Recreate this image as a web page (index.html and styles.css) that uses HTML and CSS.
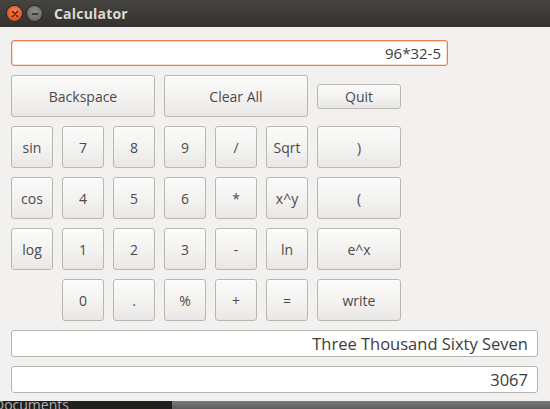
FILE: index.html
```html
<!DOCTYPE html>
<html>
<head>
<meta charset="utf-8">
<link rel="stylesheet" href="styles.css">
</head>
<body>
<div class="window">
  <div class="titlebar">
    <span class="wbtn close"><svg width="14" height="14" viewBox="0 0 14 14"><path d="M4.5 4.5 L9.5 9.5 M9.5 4.5 L4.5 9.5" stroke="#4a1a0a" stroke-width="1.4" stroke-linecap="round"/></svg></span>
    <span class="wbtn min"><svg width="14" height="14" viewBox="0 0 14 14"><path d="M4 7 H10" stroke="#2e2e2c" stroke-width="1.6"/></svg></span>
    <span class="title">Calculator</span>
  </div>
  <div class="content">
    <div class="field display">96*32-5</div>
    <div class="keys">
      <button class="key span3">Backspace</button>
      <button class="key span3">Clear All</button>
      <button class="key quit">Quit</button>

      <button class="key">sin</button>
      <button class="key">7</button>
      <button class="key">8</button>
      <button class="key">9</button>
      <button class="key">/</button>
      <button class="key">Sqrt</button>
      <button class="key">)</button>

      <button class="key">cos</button>
      <button class="key">4</button>
      <button class="key">5</button>
      <button class="key">6</button>
      <button class="key">*</button>
      <button class="key">x^y</button>
      <button class="key">(</button>

      <button class="key">log</button>
      <button class="key">1</button>
      <button class="key">2</button>
      <button class="key">3</button>
      <button class="key">-</button>
      <button class="key">ln</button>
      <button class="key">e^x</button>

      <button class="key col2">0</button>
      <button class="key">.</button>
      <button class="key">%</button>
      <button class="key">+</button>
      <button class="key">=</button>
      <button class="key">write</button>
    </div>
    <div class="field out">Three Thousand Sixty Seven</div>
    <div class="field out">3067</div>
  </div>
</div>
<div class="taskbar">
  <span class="tb-left">Documents</span>
  <span class="tb-right"></span>
</div>
</body>
</html>
```

FILE: styles.css
```css
* { box-sizing: border-box; }
html, body { margin: 0; padding: 0; }
body {
  width: 550px;
  height: 409px;
  overflow: hidden;
  background: #f2f1f0;
  font-family: "Open Sans", "DejaVu Sans", sans-serif;
  color: #3c3c3c;
}
.window {
  height: 401px;
  background: #f2f1f0;
}
.titlebar {
  height: 27px;
  background: linear-gradient(#45443f, #3a3935 60%, #33322e);
  display: flex;
  align-items: center;
  padding-left: 7px;
}
.wbtn {
  width: 15px;
  height: 15px;
  border-radius: 50%;
  display: flex;
  align-items: center;
  justify-content: center;
}
.close {
  background: radial-gradient(circle at 50% 35%, #f7825a, #e2531d 70%, #b8421a);
  box-shadow: 0 0 0 1px #2b2a27;
}
.min {
  margin-left: 5px;
  background: radial-gradient(circle at 50% 35%, #8e8c86, #6f6d68 70%, #55534f);
  box-shadow: 0 0 0 1px #2b2a27;
}
.title {
  margin-left: 12px;
  color: #dfdbd2;
  font-weight: bold;
  font-size: 14px;
  letter-spacing: 0.2px;
}
.content {
  padding: 13px 12px 0 11px;
  display: flex;
  flex-direction: column;
  gap: 9px;
}
.field {
  height: 27px;
  background: #fff;
  border: 1px solid #b7b5b1;
  border-radius: 3px;
  display: flex;
  align-items: center;
  justify-content: flex-end;
  padding-right: 9px;
  font-size: 16.5px;
  color: #3c3c3c;
}
.display {
  width: 437px;
  height: 26px;
  border-color: #e3824f;
  box-shadow: inset 0 0 0 0.5px #f0b898;
  padding-right: 6px;
  font-size: 15px;
}
.keys {
  display: grid;
  grid-template-columns: repeat(6, 42px) 84px;
  grid-auto-rows: 42px;
  gap: 9px;
}
.key {
  font-family: "Open Sans", "DejaVu Sans", sans-serif;
  font-size: 14px;
  color: #4a4a4a;
  background: linear-gradient(#fbfbfa, #f3f2f1 55%, #e8e7e5);
  border: 1px solid #b9b7b3;
  border-radius: 3px;
  padding: 0;
  box-shadow: inset 0 1px 0 #ffffff;
}
.span3 { grid-column: span 3; }
.quit {
  height: 25px;
  align-self: center;
}
.col2 { grid-column-start: 2; }
.taskbar {
  height: 8px;
  display: flex;
  overflow: hidden;
}
.tb-left {
  width: 172px;
  background: #1f1f1e;
  color: #b0b0b0;
  font-size: 14px;
  line-height: 8px;
  text-indent: -6px;
  overflow: hidden;
  white-space: nowrap;
}
.tb-right {
  flex: 1;
  background: linear-gradient(#7a7a7a, #5c5c5c);
}
```
